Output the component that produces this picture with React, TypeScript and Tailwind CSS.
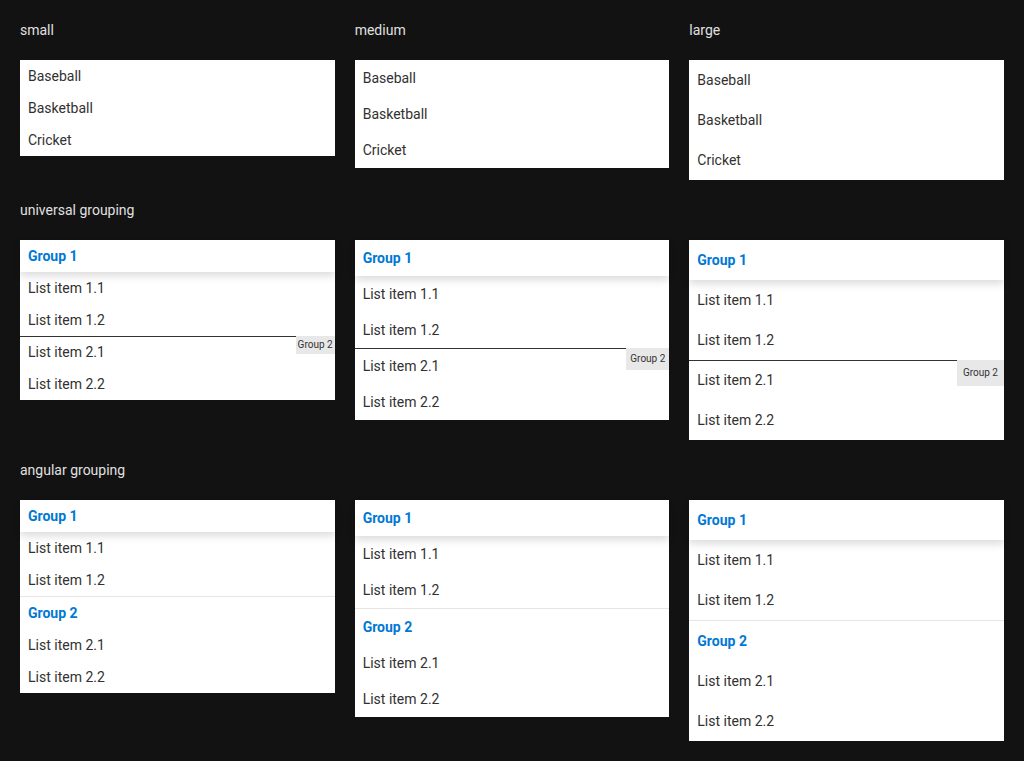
import React from "react";

type Size = "small" | "medium" | "large";

const rowH: Record<Size, string> = {
  small: "h-8",
  medium: "h-9",
  large: "h-10",
};

// group tag padding grows with list size
const tagPad: Record<Size, string> = {
  small: "px-[2px] py-[2px]",
  medium: "px-1 py-1",
  large: "px-1.5 py-1.5",
};

// pull the following rows up under the tag
const tagBack: Record<Size, string> = {
  small: "-mt-[18px]",
  medium: "-mt-[22px]",
  large: "-mt-[26px]",
};

const sizes: Size[] = ["small", "medium", "large"];

function Row({ size, children }: { size: Size; children: React.ReactNode }) {
  return (
    <div className={`${rowH[size]} flex items-center px-2 text-[14px] text-[#323130]`}>
      {children}
    </div>
  );
}

function Header({ size, children, shadow }: { size: Size; children: React.ReactNode; shadow?: boolean }) {
  return (
    <div
      className={`${rowH[size]} relative z-10 flex items-center bg-white px-2 text-[14px] font-bold text-[#0078d4] ${
        shadow ? "shadow-[0_4px_8px_rgba(0,0,0,0.14)]" : ""
      }`}
    >
      {children}
    </div>
  );
}

function SimpleList({ size }: { size: Size }) {
  return (
    <div className="bg-white">
      <Row size={size}>Baseball</Row>
      <Row size={size}>Basketball</Row>
      <Row size={size}>Cricket</Row>
    </div>
  );
}

function UniversalList({ size }: { size: Size }) {
  return (
    <div className="bg-white">
      <Header size={size} shadow>
        Group 1
      </Header>
      <Row size={size}>List item 1.1</Row>
      <Row size={size}>List item 1.2</Row>
      <div className="relative z-10 flex items-start">
        <div className="h-px flex-1 bg-[#333]" />
        <div className={`bg-[#e8e8e8] text-[10px] leading-[14px] text-[#333] ${tagPad[size]}`}>Group 2</div>
      </div>
      <div className={tagBack[size]}>
        <Row size={size}>List item 2.1</Row>
        <Row size={size}>List item 2.2</Row>
      </div>
    </div>
  );
}

function AngularList({ size }: { size: Size }) {
  return (
    <div className="bg-white">
      <Header size={size} shadow>
        Group 1
      </Header>
      <Row size={size}>List item 1.1</Row>
      <Row size={size}>List item 1.2</Row>
      <div className="h-px bg-[#e6e6e6]" />
      <Header size={size}>Group 2</Header>
      <Row size={size}>List item 2.1</Row>
      <Row size={size}>List item 2.2</Row>
    </div>
  );
}

function Section({ title, render }: { title: string; render: (s: Size) => React.ReactNode }) {
  return (
    <div>
      <div className="mb-5 h-5 text-[14px] leading-5 text-[#e0e0e0]">{title}</div>
      <div className="grid grid-cols-3 items-start gap-5">
        {sizes.map((s) => (
          <div key={s}>{render(s)}</div>
        ))}
      </div>
    </div>
  );
}

export default function App() {
  return (
    <div
      className="min-h-[761px] bg-[#121212] px-5 pt-5"
      style={{ fontFamily: "Roboto, 'Noto Sans', sans-serif" }}
    >
      <div className="flex flex-col gap-5">
        <div className="grid grid-cols-3 items-start gap-5">
          {sizes.map((s) => (
            <div key={s}>
              <div className="mb-5 h-5 text-[14px] leading-5 text-[#e0e0e0]">{s}</div>
              <SimpleList size={s} />
            </div>
          ))}
        </div>
        <Section title="universal grouping" render={(s) => <UniversalList size={s} />} />
        <Section title="angular grouping" render={(s) => <AngularList size={s} />} />
      </div>
    </div>
  );
}
